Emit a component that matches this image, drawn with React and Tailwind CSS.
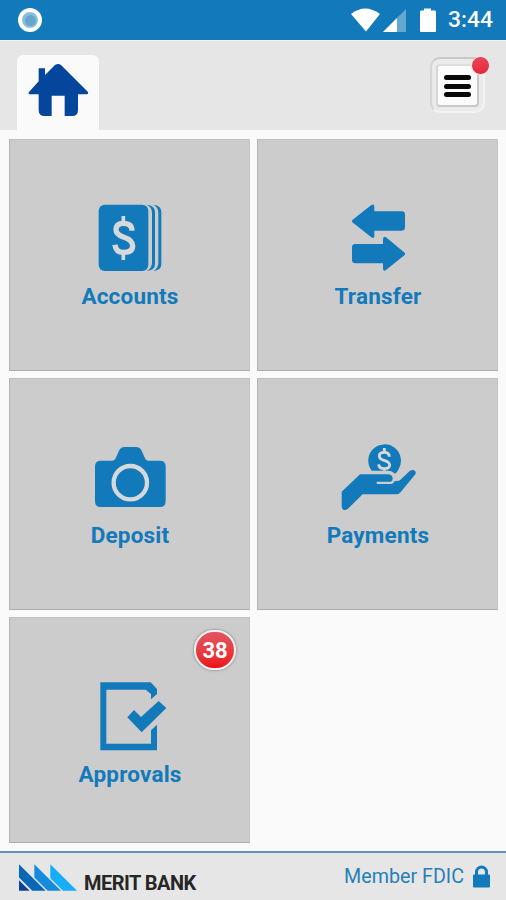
import React from 'react';

const AccountsIcon = () => (
  <svg viewBox="0 30 360 240" className="w-[120px] h-20" fill="#127aba">
    <rect x="86" y="44" width="149" height="199" rx="18" />
    <path d="M230 44 Q255 46 255 66 V222 Q255 241 230 243 Q246 234 246 218 V68 Q246 52 230 44Z" />
    <path d="M250 44 Q274 46 274 66 V222 Q274 241 250 243 Q265 234 265 218 V68 Q265 52 250 44Z" />
    <path
      d="M186 122 Q186 100 160 100 Q138 100 138 119 Q138 133 160 141 Q188 150 188 168 Q188 187 161 187 Q137 187 135 164"
      fill="none"
      stroke="#d6d8da"
      strokeWidth="16"
    />
    <path d="M160 78 V97 M160 188 V210" fill="none" stroke="#d6d8da" strokeWidth="11" />
  </svg>
);

const TransferIcon = () => (
  <svg viewBox="-6 30 360 240" className="w-[120px] h-20" fill="#127aba">
    <path d="M97 90 L154 45 Q163 40 163 50 V64 H245 Q255 64 255 74 V112 Q255 122 245 122 H163 V137 Q163 148 154 142 L97 97 Q94 93 97 90Z" />
    <path d="M254 188 L198 142 Q189 137 189 148 V162 H106 Q96 162 96 172 V210 Q96 220 106 220 H189 V235 Q189 246 198 240 L254 195 Q257 191 254 188Z" />
  </svg>
);

const DepositIcon = () => (
  <svg viewBox="0 27 360 240" className="w-[120px] h-20" fill="#127aba">
    <path d="M92 92 H128 Q134 92 137 85 L147 62 Q152 51 164 51 H198 Q210 51 215 62 L225 85 Q228 92 234 92 H270 Q287 92 287 109 V213 Q287 231 270 231 H92 Q75 231 75 213 V109 Q75 92 92 92Z" />
    <circle cx="181" cy="158" r="50" fill="none" stroke="#d6d8da" strokeWidth="13" />
  </svg>
);

const PaymentsIcon = () => (
  <svg viewBox="-6 27 360 240" className="w-[120px] h-20" fill="#127aba">
    <path d="M155 122 A49 49 0 1 1 236 117 Q232 127 225 131 Q216 122 205 122Z" />
    <path
      d="M208 80 Q208 67 193 67 Q178 67 178 78 Q178 87 192 91 Q209 96 209 105 Q209 116 193 116 Q177 116 176 103 M193 54 V66 M193 117 V122"
      fill="none"
      stroke="#d6d8da"
      strokeWidth="8.5"
    />
    <path d="M120 133 H205 Q218 134 218 146 Q218 153 212 155 H170 V162 H214 Q222 161 224 153 H233 Q239 153 243 148 L269 123 Q277 117 285 122 Q289 127 286 133 L243 185 Q237 193 228 193 H128 L83 237 Q77 242 70 239 Q65 236 65 229 V185Z" />
  </svg>
);

const ApprovalsIcon = () => (
  <svg viewBox="1 174 360 240" className="w-[120px] h-20" fill="#127aba">
    <path d="M92 187 H243 L262 207 V222 L244 238 V222 L228 209 H110 V371 H244 V331 L262 314 V391 H92Z" />
    <path d="M173 292 L193 270 L214 291 L267 243 L290 264 L216 337Z" />
  </svg>
);

const tiles = [
  { label: 'Accounts', Icon: AccountsIcon },
  { label: 'Transfer', Icon: TransferIcon },
  { label: 'Deposit', Icon: DepositIcon },
  { label: 'Payments', Icon: PaymentsIcon },
  { label: 'Approvals', Icon: ApprovalsIcon, badge: 38 },
];

const StatusBar = () => (
  <div className="flex h-10 items-center justify-between bg-[#127aba] pl-[18px] pr-[13px]">
    <div className="flex h-6 w-6 items-center justify-center rounded-full border-[4.5px] border-white bg-[#8abfdd]">
      <span className="h-[11px] w-[11px] rounded-full bg-[#65a6cd]" />
    </div>
    <div className="flex items-center">
      <svg viewBox="0 0 90 28" className="h-7 w-[90px]" fill="white">
        <path d="M1 8 Q15 -3 30 8 L16 25.5Z" />
        <path d="M33 26 L56 3 V26Z" opacity="0.35" />
        <path d="M33 26 L47 12 V26Z" />
        <path d="M74 2.5 H81 V4.5 H85 Q86 4.5 86 6 V25 Q86 26 85 26 H71 Q70 26 70 25 V6 Q70 4.5 71 4.5 H74Z" />
      </svg>
      <span className="ml-[8px] text-[22.8px] font-medium leading-6 text-white">3:44</span>
    </div>
  </div>
);

const Header = () => (
  <div className="flex h-[90px] items-end justify-between border-t border-[#f0f0f0] bg-[#e6e6e6] pl-[17px] pr-[21px]">
    <div className="flex h-[75px] w-[82px] justify-center rounded-t-md bg-[#fafafa] pt-2">
      <svg viewBox="84 189 183 162" className="h-[54px] w-[61px]" fill="#04469b">
        <path d="M165 195 Q175 189 183 195 L264 276 Q266 283 259 283 H234 V330 Q234 348 216 348 H194 V287 H155 V348 H134 Q116 348 116 330 V283 H90 Q83 282 87 276 L116 244 V205 H135 V225Z" />
      </svg>
    </div>
    <div className="relative mb-[17px] flex h-[56px] w-[55px] items-center justify-center rounded-[10px] border-2 border-[#f3f3f3] border-l-[#d6d6d6] border-t-[#c8c8c8] bg-[#ebebeb]">
      <div className="flex h-[43px] w-[43px] flex-col items-center justify-center gap-[3.5px] rounded border-2 border-[#c9c9c9] border-l-[#d6d6d6] border-t-[#dddddd] bg-[#fbfbfb] pt-[2px]">
        <span className="h-[5px] w-[27px] rounded-full bg-[#080808]" />
        <span className="h-[5px] w-[27px] rounded-full bg-[#080808]" />
        <span className="h-[5px] w-[27px] rounded-full bg-[#080808]" />
      </div>
      <span className="absolute -right-[7px] -top-[3px] h-[19px] w-[19px] rounded-full border-[1.5px] border-[#f4e4e6] bg-linear-to-b from-[#e8455a] to-[#e7263a]" />
    </div>
  </div>
);

const Tile = ({ label, Icon, badge }) => (
  <div className="relative flex flex-col items-center border border-b-[#acacac] border-l-[#b3b3b3] border-r-[#c4c4c4] border-t-[#c0c0c0] bg-[#cccccc] pt-[60px]">
    <Icon />
    <span className="mt-[2px] pl-px text-[22.5px] font-bold leading-[28px] tracking-[0.2px] text-[#127aba]">{label}</span>
    {badge && (
      <span className="absolute right-[13px] top-[12px] flex h-[40px] w-[42px] items-center justify-center rounded-full border-2 border-[#f6f0f0] bg-linear-to-b from-[#e05562] to-[#ed0a13] pt-px text-[22px] font-bold text-white shadow-[0_0_3px_#777]">
        {badge}
      </span>
    )}
  </div>
);

const Footer = () => (
  <div className="flex h-[49px] items-center justify-between border-t-2 border-[#6990bd] bg-[#e6e6e6] pl-[19px] pr-4">
    <div className="flex items-end pt-[3px]">
      <svg viewBox="57 100 174 80" className="mb-[2px] h-[27px] w-[58px]">
        <path d="M57 148 L89 180 H57Z" fill="#124193" />
        <path d="M57 100 L137 180 H97 L57 140Z" fill="#0868b5" />
        <path d="M103 100 L183 180 H143 L103 140Z" fill="#158bdc" />
        <path d="M151 100 L231 180 H189 L151 142Z" fill="#16adf9" />
      </svg>
      <span className="ml-[7px] text-[20px] font-bold leading-[20px] tracking-[-0.52px] text-[#262626]">MERIT BANK</span>
    </div>
    <div className="flex items-center">
      <span className="pt-px text-[19.7px] leading-6 text-[#267fb7]">Member FDIC</span>
      <svg viewBox="0 0 17 23" className="ml-[9px] h-[23px] w-[17px]">
        <path d="M3.5 12 V7 A5 5 0 0 1 13.5 7 V12" fill="none" stroke="#127aba" strokeWidth="3" />
        <rect y="9.5" width="17" height="13" rx="1" fill="#127aba" />
      </svg>
    </div>
  </div>
);

const App = () => {
  return (
    <div className="flex h-[900px] w-[506px] flex-col overflow-hidden bg-[#fafafa] font-['Roboto',sans-serif]">
      <StatusBar />
      <Header />
      <div className="grid flex-1 grid-cols-2 grid-rows-[232px_232px_226px] gap-[7px] pl-[9px] pr-2 pt-[9px]">
        {tiles.map((tile) => (
          <Tile key={tile.label} {...tile} />
        ))}
      </div>
      <Footer />
    </div>
  );
};

export default App;
